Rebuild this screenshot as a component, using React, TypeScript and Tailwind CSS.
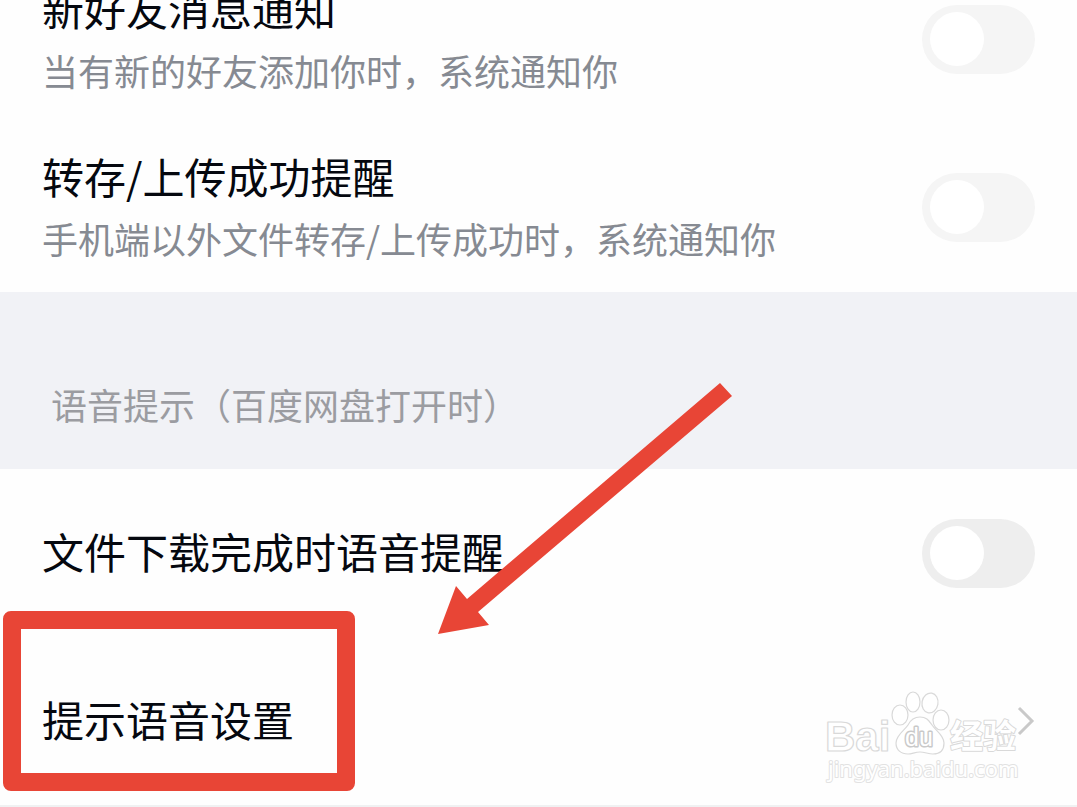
import React, { useState } from 'react';

type ToggleRowProps = {
  id: string;
  title: string;
  description?: string;
  dimmed?: boolean;
};

const ToggleRow = ({ id, title, description, dimmed }: ToggleRowProps) => {
  const [enabled, setEnabled] = useState(false);

  return (
    <div className="flex h-[168px] items-center justify-between px-[42px]">
      <label
        htmlFor={id}
        className={`flex flex-col whitespace-nowrap ${description ? '' : 'pb-1'}`}
      >
        <span className="text-[42px] leading-[62px] text-[#05080f]">{title}</span>
        {description && (
          <span className="text-[36px] leading-[62px] text-[#868a92]">{description}</span>
        )}
      </label>
      <input
        id={id}
        type="checkbox"
        role="switch"
        checked={enabled}
        onChange={(e) => setEnabled(e.target.checked)}
        className={`flex h-[69px] w-[113px] shrink-0 appearance-none items-center rounded-full px-2 before:h-[54px] before:w-[54px] before:rounded-full before:bg-white checked:justify-end checked:bg-blue-500 ${
          dimmed ? 'bg-[#f5f5f5]' : 'bg-[#eeeeee]'
        }`}
      />
    </div>
  );
};

const Watermark = () => (
  <svg
    viewBox="0 0 210 100"
    className="pointer-events-none absolute right-[47px] bottom-[17px] h-[100px] w-[210px]"
    fill="#ffffff"
    stroke="#d9d9d9"
    strokeWidth="1.2"
    strokeLinejoin="round"
    aria-hidden="true"
  >
    <text x="5" y="63" fontSize="42" fontWeight="700" fontFamily="Liberation Sans, sans-serif">
      Bai
    </text>
    {/* paw */}
    <ellipse cx="80" cy="27" rx="8" ry="10" />
    <ellipse cx="93" cy="14" rx="7" ry="10" />
    <ellipse cx="110" cy="15" rx="8" ry="10" transform="rotate(10 110 15)" />
    <ellipse cx="121" cy="32" rx="8" ry="10" />
    <path d="M100 29c-7 0-10 4-12 8-3 5-12 10-12 18 0 7 5 11 12 11 4 0 7-2 12-2s8 2 13 2c7 0 11-4 11-11 0-8-8-12-12-18-3-4-5-8-12-8z" />
    <text
      x="85"
      y="58"
      fontSize="25"
      fontWeight="400"
      stroke="#c9c9c9"
      fontFamily="Liberation Sans, sans-serif"
      strokeWidth="3"
      paintOrder="stroke"
    >
      du
    </text>
    <text
      x="130"
      y="60"
      fontSize="33"
      fontWeight="700"
      strokeWidth="2"
      paintOrder="stroke"
      fontFamily="Noto Sans CJK SC, sans-serif"
    >
      经验
    </text>
    <text
      x="8"
      y="89"
      fontSize="22"
      stroke="#e2e2e2"
      strokeWidth="2"
      paintOrder="stroke"
      fontFamily="Noto Sans, sans-serif"
    >
      jingyan.baidu.com
    </text>
  </svg>
);

const App = () => {
  return (
    <main
      lang="zh-CN"
      className="relative flex min-h-screen flex-col overflow-hidden bg-[#fefefe] font-['Noto_Sans_CJK_SC',sans-serif]"
    >
      {/* the list is scrolled, first row is partly out of view */}
      <section className="-mt-[45px]">
        <ToggleRow
          id="new-friend"
          title="新好友消息通知"
          description="当有新的好友添加你时，系统通知你"
          dimmed
        />
        <ToggleRow
          id="transfer"
          title="转存/上传成功提醒"
          description="手机端以外文件转存/上传成功时，系统通知你"
          dimmed
        />
      </section>

      <h2 className="mt-px bg-[#f1f2f6] px-[51px] pt-[81px] pb-[34px] text-[36px] leading-[62px] text-[#9b9ca1]">
        语音提示（百度网盘打开时）
      </h2>

      <section>
        <ToggleRow id="download-voice" title="文件下载完成时语音提醒" />
        <div className="relative border-b-2 border-[#f0f1f2]">
          <a
            href="#voice"
            className="flex h-[168px] items-center justify-between px-[42px]"
          >
            <span className="pb-1 text-[42px] leading-[62px] text-[#05080f]">提示语音设置</span>
            <svg
              viewBox="0 0 18 30"
              className="h-[30px] w-[18px]"
              fill="none"
              stroke="#c9c9c9"
              strokeWidth="3"
            >
              <path d="M2 2l13 13L2 28" />
            </svg>
          </a>
          <div className="pointer-events-none absolute -top-[26px] left-[3px] h-[180px] w-[352px] rounded-lg border-18 border-[#e84536]" />
          <Watermark />
        </div>
      </section>

      <svg
        viewBox="0 0 294 252"
        className="pointer-events-none absolute top-[383px] left-[438px] h-[252px] w-[294px]"
        fill="#e84536"
        aria-hidden="true"
      >
        <path d="M282 0L294 13L40 229L51 242L0 251L18 203L29 216Z" />
      </svg>
    </main>
  );
};

export default App;
